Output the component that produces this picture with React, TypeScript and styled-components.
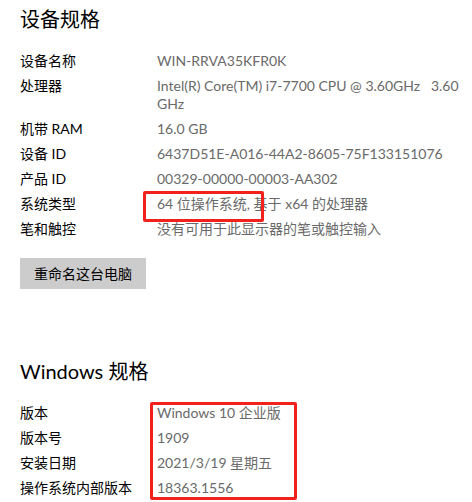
import React from "react";
import styled, { createGlobalStyle } from "styled-components";

const GlobalStyle = createGlobalStyle`
  html, body {
    margin: 0;
    padding: 0;
    background: #ffffff;
  }
  body {
    font-family: Lato, "Noto Sans CJK SC", sans-serif;
    -webkit-font-smoothing: antialiased;
  }
`;

const Page = styled.div`
  position: relative;
  width: 472px;
  height: 502px;
  overflow: hidden;
  padding: 5px 0 0 20px;
  box-sizing: border-box;
  background: #fff;
`;

const Heading = styled.h2<{ $top?: number }>`
  margin: ${(p) => p.$top ?? 0}px 0 19px 0;
  font-size: 20px;
  line-height: 28px;
  height: 28px;
  font-weight: 400;
  color: #000;
`;

const SpecList = styled.div`
  display: flex;
  flex-direction: column;
  gap: 7px;
`;

const Row = styled.div`
  display: grid;
  grid-template-columns: 137px 1fr;
  font-size: 14px;
  line-height: 18px;
`;

const Label = styled.div`
  color: #000;
`;

const Value = styled.div`
  color: #6a6a6a;
  white-space: pre;
`;

const RenameButton = styled.button`
  display: block;
  margin-top: 20px;
  height: 31px;
  width: 126px;
  padding: 0;
  border: none;
  background: #cccccc;
  color: #000;
  font-family: inherit;
  font-size: 14px;
  line-height: 31px;
  text-align: center;
  cursor: pointer;
`;

const Highlight = styled.div<{ $x: number; $y: number; $w: number; $h: number }>`
  position: absolute;
  left: ${(p) => p.$x}px;
  top: ${(p) => p.$y}px;
  width: ${(p) => p.$w}px;
  height: ${(p) => p.$h}px;
  box-sizing: border-box;
  border: 3px solid #f2211c;
  border-radius: 2px;
  pointer-events: none;
`;

const deviceSpecs: [string, React.ReactNode][] = [
  ["设备名称", "WIN-RRVA35KFR0K"],
  [
    "处理器",
    <>
      {"Intel(R) Core(TM) i7-7700 CPU @ 3.60GHz   3.60"}
      <br />
      GHz
    </>,
  ],
  ["机带 RAM", "16.0 GB"],
  ["设备 ID", "6437D51E-A016-44A2-8605-75F133151076"],
  ["产品 ID", "00329-00000-00003-AA302"],
  ["系统类型", "64 位操作系统, 基于 x64 的处理器"],
  ["笔和触控", "没有可用于此显示器的笔或触控输入"],
];

const windowsSpecs: [string, string][] = [
  ["版本", "Windows 10 企业版"],
  ["版本号", "1909"],
  ["安装日期", "2021/3/19 星期五"],
  ["操作系统内部版本", "18363.1556"],
];

export default function App() {
  return (
    <>
      <GlobalStyle />
      <Page>
        <Heading>设备规格</Heading>
        <SpecList>
          {deviceSpecs.map(([k, v]) => (
            <Row key={k}>
              <Label>{k}</Label>
              <Value>{v}</Value>
            </Row>
          ))}
        </SpecList>
        <RenameButton>重命名这台电脑</RenameButton>
        <Heading $top={68}>Windows 规格</Heading>
        <SpecList>
          {windowsSpecs.map(([k, v]) => (
            <Row key={k}>
              <Label>{k}</Label>
              <Value>{v}</Value>
            </Row>
          ))}
        </SpecList>
        <Highlight $x={143} $y={191} $w={121} $h={31} />
        <Highlight $x={150} $y={402} $w={147} $h={98} />
      </Page>
    </>
  );
}
